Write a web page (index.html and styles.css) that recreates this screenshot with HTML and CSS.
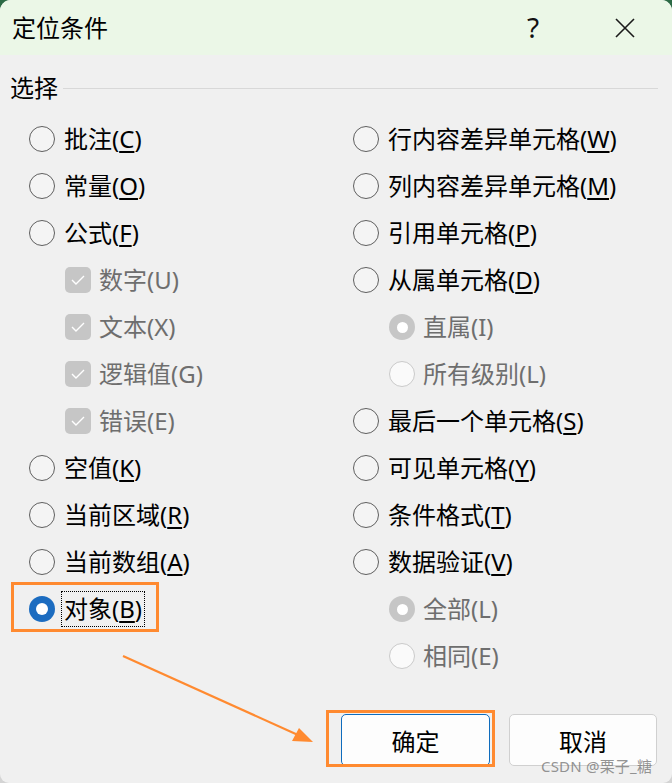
FILE: index.html
```html
<!DOCTYPE html>
<html lang="zh-CN">
<head>
<meta charset="utf-8">
<title>定位条件</title>
<link rel="stylesheet" href="styles.css">
</head>
<body>
<div class="dialog">
  <div class="titlebar">
    <div class="title">定位条件</div>
    <div class="tb-buttons">
      <span class="tb-btn help">?</span>
      <span class="tb-btn close">
        <svg width="20" height="20" viewBox="0 0 20 20"><path d="M1 1 L19 19 M19 1 L1 19" stroke="#1a1a1a" stroke-width="1.6" fill="none"/></svg>
      </span>
    </div>
  </div>

  <div class="group-head"><span class="group-label">选择</span><span class="group-line"></span></div>

  <div class="options">
    <div class="col">
      <div class="opt"><span class="radio"></span><span class="lbl">批注(<u>C</u>)</span></div>
      <div class="opt"><span class="radio"></span><span class="lbl">常量(<u>O</u>)</span></div>
      <div class="opt"><span class="radio"></span><span class="lbl">公式(<u>F</u>)</span></div>
      <div class="opt sub dis"><span class="check"><svg width="14" height="10" viewBox="0 0 14 10"><path d="M1 5 L5 9 L13 1" stroke="#fff" stroke-width="1.4" fill="none"/></svg></span><span class="lbl">数字(U)</span></div>
      <div class="opt sub dis"><span class="check"><svg width="14" height="10" viewBox="0 0 14 10"><path d="M1 5 L5 9 L13 1" stroke="#fff" stroke-width="1.4" fill="none"/></svg></span><span class="lbl">文本(X)</span></div>
      <div class="opt sub dis"><span class="check"><svg width="14" height="10" viewBox="0 0 14 10"><path d="M1 5 L5 9 L13 1" stroke="#fff" stroke-width="1.4" fill="none"/></svg></span><span class="lbl">逻辑值(G)</span></div>
      <div class="opt sub dis"><span class="check"><svg width="14" height="10" viewBox="0 0 14 10"><path d="M1 5 L5 9 L13 1" stroke="#fff" stroke-width="1.4" fill="none"/></svg></span><span class="lbl">错误(E)</span></div>
      <div class="opt"><span class="radio"></span><span class="lbl">空值(<u>K</u>)</span></div>
      <div class="opt"><span class="radio"></span><span class="lbl">当前区域(<u>R</u>)</span></div>
      <div class="opt"><span class="radio"></span><span class="lbl">当前数组(<u>A</u>)</span></div>
      <div class="opt"><span class="radio on"></span><span class="lbl focus">对象(<u>B</u>)</span></div>
    </div>
    <div class="col">
      <div class="opt"><span class="radio"></span><span class="lbl">行内容差异单元格(<u>W</u>)</span></div>
      <div class="opt"><span class="radio"></span><span class="lbl">列内容差异单元格(<u>M</u>)</span></div>
      <div class="opt"><span class="radio"></span><span class="lbl">引用单元格(<u>P</u>)</span></div>
      <div class="opt"><span class="radio"></span><span class="lbl">从属单元格(<u>D</u>)</span></div>
      <div class="opt sub dis"><span class="radio dis-on"></span><span class="lbl">直属(I)</span></div>
      <div class="opt sub dis"><span class="radio dis-off"></span><span class="lbl">所有级别(L)</span></div>
      <div class="opt"><span class="radio"></span><span class="lbl">最后一个单元格(<u>S</u>)</span></div>
      <div class="opt"><span class="radio"></span><span class="lbl">可见单元格(<u>Y</u>)</span></div>
      <div class="opt"><span class="radio"></span><span class="lbl">条件格式(<u>T</u>)</span></div>
      <div class="opt"><span class="radio"></span><span class="lbl">数据验证(<u>V</u>)</span></div>
      <div class="opt sub dis"><span class="radio dis-on"></span><span class="lbl">全部(L)</span></div>
      <div class="opt sub dis"><span class="radio dis-off"></span><span class="lbl">相同(E)</span></div>
    </div>
  </div>

  <div class="actions">
    <button class="btn primary">确定</button>
    <button class="btn">取消</button>
  </div>

  <div class="mark mark-opt"></div>
  <div class="mark mark-btn"></div>
  <svg class="arrow" width="672" height="783" viewBox="0 0 672 783">
    <line x1="123" y1="656" x2="298" y2="735" stroke="#ff8a30" stroke-width="2.2"/>
    <polygon points="313,742 292,741 299,728" fill="#ff8a30"/>
  </svg>
  <div class="watermark">CSDN @栗子_糖</div>
</div>
</body>
</html>
```

FILE: styles.css
```css
* { box-sizing: border-box; }
html, body { margin: 0; padding: 0; }
body {
  width: 672px;
  height: 783px;
  overflow: hidden;
  background: linear-gradient(#2c6a45 0 60px, #d4d4d4 60px);
  font-family: "Noto Sans", "Noto Sans CJK SC", sans-serif;
  color: #000;
}
.dialog {
  position: relative;
  width: 672px;
  height: 783px;
  background: #f0f0f0;
  border-radius: 11px 11px 9px 9px;
  overflow: hidden;
}
.titlebar {
  height: 55px;
  background: #ebf7e7;
  display: flex;
  align-items: center;
  justify-content: space-between;
  padding-left: 12px;
  padding-right: 24px;
}
.title {
  font-size: 24px;
  line-height: 30px;
}
.tb-buttons { display: flex; gap: 46px; align-items: center; }
.tb-btn {
  width: 46px;
  height: 40px;
  display: flex;
  align-items: center;
  justify-content: center;
}
.help { font-size: 28px; font-family: "Noto Sans", sans-serif; color: #111; padding-bottom: 2px; }

.group-head {
  display: flex;
  align-items: center;
  gap: 5px;
  padding: 21px 14px 0 10px;
  height: 45px;
  margin-bottom: 15.5px;
}
.group-label { font-size: 24px; line-height: 24px; }
.group-line { flex: 1; border-top: 1px solid #d8d8d8; margin-top: 1px; }

.options {
  display: grid;
  grid-template-columns: 324px 1fr;
  padding-left: 29px;
}
.col { display: flex; flex-direction: column; }
.opt {
  height: 47px;
  display: flex;
  align-items: center;
  gap: 9px;
  font-size: 24px;
}
.opt.sub { padding-left: 36px; gap: 8px; }
.opt.dis { color: #6e6e6e; }
.lbl { line-height: 30px; white-space: nowrap; }
.lbl u { text-underline-offset: 3px; text-decoration-thickness: 1.5px; }
.lbl.focus {
  outline: 1px dotted #000;
  outline-offset: 0;
  padding: 2px 2px;
  margin-left: -2px;
}

.radio {
  flex: none;
  width: 26px;
  height: 26px;
  border-radius: 50%;
  border: 1.5px solid #5f5f5f;
  background: #f4f4f4;
  display: flex;
  align-items: center;
  justify-content: center;
}
.radio.on { background: #1c6cc0; border: none; }
.radio.on::after {
  content: "";
  width: 12px;
  height: 12px;
  border-radius: 50%;
  background: #fff;
}
.radio.dis-on { background: #c6c6c6; border: none; }
.radio.dis-on::after {
  content: "";
  width: 11px;
  height: 11px;
  border-radius: 50%;
  background: #fff;
}
.radio.dis-off { background: #fafafa; border: 1.5px solid #cacaca; }

.check {
  flex: none;
  width: 26px;
  height: 26px;
  border-radius: 5px;
  background: #c6c6c6;
  display: flex;
  align-items: center;
  justify-content: center;
}

.actions {
  display: flex;
  justify-content: flex-end;
  gap: 19px;
  padding-right: 15px;
  margin-top: 34.5px;
}
.btn {
  width: 148px;
  height: 52px;
  border-radius: 5px;
  border: 1px solid #d0d0d0;
  background: #fdfdfd;
  font-family: "Noto Sans CJK SC", sans-serif;
  font-size: 24px;
  line-height: 24px;
  color: #000;
  padding: 2px 0 0;
}
.btn.primary { width: 149px; border: 1px solid #0f6cbd; }

.mark {
  position: absolute;
  border: 3px solid #ff8a30;
}
.mark-opt { left: 11px; top: 582px; width: 148px; height: 50px; }
.mark-btn { left: 326px; top: 710px; width: 169px; height: 57px; }
.arrow { position: absolute; left: 0; top: 0; pointer-events: none; }
.watermark {
  position: absolute;
  left: 541px;
  top: 759px;
  font-family: "Noto Sans", "Noto Sans CJK SC", sans-serif;
  font-size: 15px;
  line-height: 15px;
  color: rgba(120, 120, 120, 0.8);
  letter-spacing: 0.2px;
}
```
